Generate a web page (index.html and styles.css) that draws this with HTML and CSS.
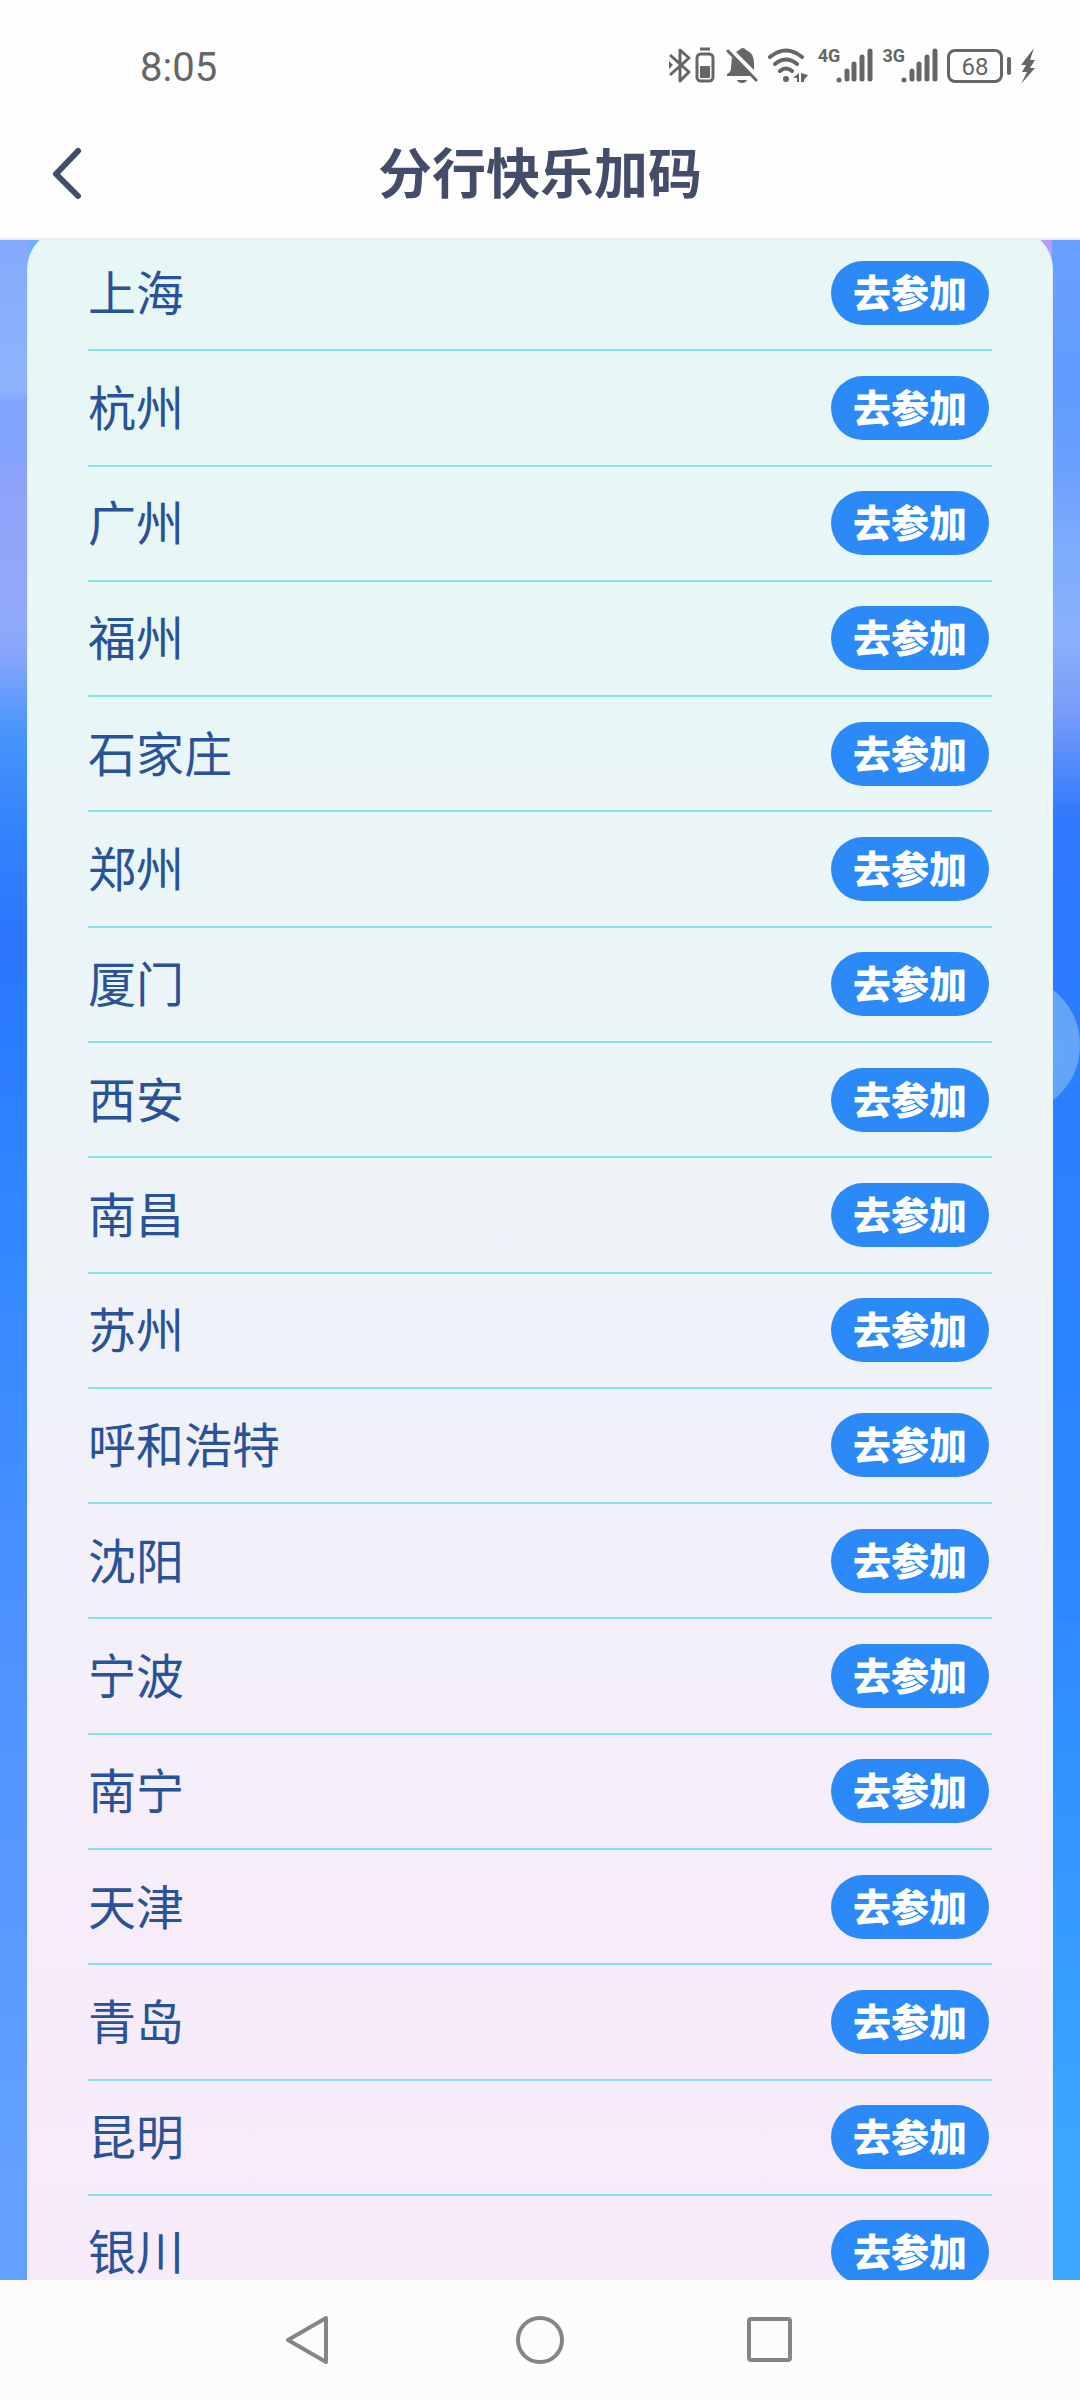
FILE: index.html
```html
<!DOCTYPE html>
<html lang="zh-CN">
<head>
<meta charset="utf-8">
<meta name="viewport" content="width=device-width, initial-scale=1">
<title>分行快乐加码</title>
<link rel="stylesheet" href="styles.css">
</head>
<body>
<div class="status">
  <span class="clock">8:05</span>
  <div class="status-icons">
    <svg class="ico-bt" width="48" height="38" viewBox="0 0 48 38" fill="none" stroke="#666" stroke-width="3" aria-hidden="true">
      <path d="M1 8l19 17-9 9V3l9 8L1 28" stroke-linejoin="round"/>
      <path d="M0 14l4 4-4 4z" fill="#666" stroke="none"/>
      <rect x="28" y="7" width="16" height="27" rx="4"/>
      <path d="M31 2h10"/>
      <rect x="31" y="19" width="10" height="12" fill="#666" stroke="none"/>
    </svg>
    <svg class="ico-bell" width="32" height="38" viewBox="0 0 32 38" fill="#666" aria-hidden="true">
      <path d="M10 5q2-1 3-2 4-4 7 0 8 3 8 13v7zM6 10l20 19H1v-2q4-2 4-6zM11 33h10q-1 3-5 3t-5-3z"/>
      <path d="M2 4l28 29" fill="none" stroke="#666" stroke-width="3" stroke-linecap="round"/>
    </svg>
    <svg class="ico-wifi" width="42" height="38" viewBox="0 0 42 38" fill="none" stroke="#666" stroke-width="4" stroke-linecap="round" aria-hidden="true">
      <path d="M3 10q16-13 32 0M8 17q11-9 22 0M13 24q6-5 12 0"/>
      <circle cx="19" cy="32" r="3" fill="#666" stroke="none"/>
      <path d="M26 31l6-5v9h-2v-4zM34 26l7 2-4 5v2h-3z" fill="#666" stroke="none"/>
    </svg>
    <div class="signal"><span>4G</span>
      <svg width="38" height="38" viewBox="0 0 38 38" stroke="#666" stroke-width="5" stroke-linecap="round" aria-hidden="true"><path d="M4 33v0M12 32v-8M19 32v-15M27 32v-22M35 32V4"/></svg>
    </div>
    <div class="signal"><span>3G</span>
      <svg width="38" height="38" viewBox="0 0 38 38" stroke="#666" stroke-width="5" stroke-linecap="round" aria-hidden="true"><path d="M4 33v0M12 32v-8M19 32v-15M27 32v-22M35 32V4"/></svg>
    </div>
    <div class="battery"><span>68</span></div>
    <svg class="ico-bolt" width="16" height="38" viewBox="0 0 16 38" fill="#666" aria-hidden="true"><path d="M14 1L1 18h5l-4 7h5L1 37l14-16h-5l5-8h-5z"/></svg>
  </div>
</div>
<header class="titlebar">
  <button class="back" type="button" aria-label="返回">
    <svg width="32" height="56" viewBox="0 0 32 56" fill="none" stroke="#434d69" stroke-width="6" stroke-linecap="round" stroke-linejoin="round" aria-hidden="true"><path d="M26 6L4 29l22 22"/></svg>
  </button>
  <h1>分行快乐加码</h1>
</header>
<main class="stage">
  <div class="bubble"></div>
  <ul class="card">
    <li><span>上海</span><button type="button">去参加</button></li>
    <li><span>杭州</span><button type="button">去参加</button></li>
    <li><span>广州</span><button type="button">去参加</button></li>
    <li><span>福州</span><button type="button">去参加</button></li>
    <li><span>石家庄</span><button type="button">去参加</button></li>
    <li><span>郑州</span><button type="button">去参加</button></li>
    <li><span>厦门</span><button type="button">去参加</button></li>
    <li><span>西安</span><button type="button">去参加</button></li>
    <li><span>南昌</span><button type="button">去参加</button></li>
    <li><span>苏州</span><button type="button">去参加</button></li>
    <li><span>呼和浩特</span><button type="button">去参加</button></li>
    <li><span>沈阳</span><button type="button">去参加</button></li>
    <li><span>宁波</span><button type="button">去参加</button></li>
    <li><span>南宁</span><button type="button">去参加</button></li>
    <li><span>天津</span><button type="button">去参加</button></li>
    <li><span>青岛</span><button type="button">去参加</button></li>
    <li><span>昆明</span><button type="button">去参加</button></li>
    <li><span>银川</span><button type="button">去参加</button></li>
  </ul>
</main>
<nav class="sysnav">
  <button type="button" aria-label="后退"><svg width="52" height="52" viewBox="0 0 52 52" aria-hidden="true"><path d="M43 4L5 26l38 22z"/></svg></button>
  <button type="button" aria-label="主页"><svg width="52" height="52" viewBox="0 0 52 52" aria-hidden="true"><circle cx="26" cy="26" r="22"/></svg></button>
  <button type="button" aria-label="最近任务"><svg width="52" height="52" viewBox="0 0 52 52" aria-hidden="true"><rect x="4" y="5" width="41" height="41" rx="2"/></svg></button>
</nav>
</body>
</html>
```
FILE: styles.css
```css
* { box-sizing: border-box; }

body {
  margin: 0;
  height: 100vh;
  display: flex;
  flex-direction: column;
  overflow: hidden;
  background: #fefefe;
  font-family: "Noto Sans CJK SC", "Noto Sans", sans-serif;
}

button {
  padding: 0;
  border: 0;
  background: none;
  font-family: inherit;
}

svg { display: block; }

.status {
  height: 108px;
  padding: 24px 44px 0 140px;
  display: flex;
  align-items: center;
  justify-content: space-between;
  color: #666;
}

.clock {
  font: 40px/48px Roboto, sans-serif;
  padding-top: 4px;
}

.status-icons {
  display: flex;
  align-items: center;
  gap: 9px;
}

.signal {
  display: flex;
  align-items: flex-start;
}

.signal span {
  font: bold 18px/18px Roboto, sans-serif;
  margin-right: -5px;
}

.battery {
  position: relative;
  width: 56px;
  height: 34px;
  margin-right: 8px;
  border: 3px solid #666;
  border-radius: 8px;
  text-align: center;
  font: 24px/30px Roboto, sans-serif;
}

.battery::after {
  content: "";
  position: absolute;
  right: -11px;
  top: 5px;
  width: 4px;
  height: 18px;
  border-radius: 2px;
  background: #666;
}

.titlebar {
  height: 132px;
  padding: 0 52px;
  display: grid;
  grid-template-columns: 1fr auto 1fr;
  align-items: center;
  border-bottom: 2px solid #ececee;
}

.back { justify-self: start; }

h1 {
  margin: 0;
  padding-bottom: 4px;
  font-size: 54px;
  line-height: 72px;
  font-weight: 700;
  color: #434d69;
}

.stage {
  flex: 1;
  min-height: 0;
  position: relative;
  display: flex;
  overflow: hidden;
  background:
    linear-gradient(#b99cf9, #b99cf9) right 28px top 0 / 30px 40px no-repeat,
    linear-gradient(#70b0fb, #70b0fb) left 28px top 0 / 30px 20px no-repeat,
    linear-gradient(#84abfc 0, #8db4fc 150px, #80a4fc 162px, #80a4fc 210px, #8fa2fa 240px, #92aafb 380px, #86a6fc 415px, #4a95fb 490px, #3484fc 580px, #2b76fd 700px, #2a7bff 780px, #3388ff 1000px, #4d92ff 1400px, #64a1ff 1950px) left / 50% 100% no-repeat,
    linear-gradient(#6a9fff 0, #5f9cff 150px, #6a9ffd 223px, #7dadfd 312px, #8ab0fa 400px, #7a9cf8 469px, #5a8ffb 513px, #3078fd 580px, #2a7afd 700px, #2a7fff 850px, #2d86ff 1300px, #3aa6ff 1900px) right / 50% 100% no-repeat;
}

.bubble {
  position: absolute;
  right: 0;
  top: 735px;
  width: 140px;
  height: 140px;
  border-radius: 50%;
  border: 2px solid #61a3fb;
  background: radial-gradient(circle at 80% 55%, #66a6f8, #5c9ff6);
}

.card {
  position: relative;
  flex: 1;
  display: flex;
  flex-direction: column;
  margin: -11px 27px -32px;
  padding: 6px 60px 0;
  list-style: none;
  border: 1px solid #dff0fb;
  border-radius: 40px 40px 0 0;
  background: linear-gradient(#e7f7f5 0, #e9f6f7 500px, #eef3f8 1050px, #f6edf9 1650px, #f7ebf9 2080px);
}

.card li {
  flex: 1;
  display: flex;
  align-items: center;
  justify-content: space-between;
  padding-right: 3px;
  border-bottom: 2px solid #86e2ea;
}

.card span {
  padding-bottom: 6px;
  font-size: 48px;
  line-height: 64px;
  color: #2a5297;
}

.card button {
  width: 158px;
  height: 64px;
  padding-bottom: 4px;
  border-radius: 32px;
  background: #2b8af7;
  color: #fff;
  font-size: 38px;
  line-height: 56px;
  font-weight: 900;
}

.sysnav {
  height: 120px;
  padding: 0 194px;
  display: grid;
  grid-template-columns: repeat(3, 1fr);
  justify-items: center;
  align-items: center;
  background: #fcfcfc;
}

.sysnav svg {
  fill: none;
  stroke: #858585;
  stroke-width: 4px;
  stroke-linejoin: round;
}
```
